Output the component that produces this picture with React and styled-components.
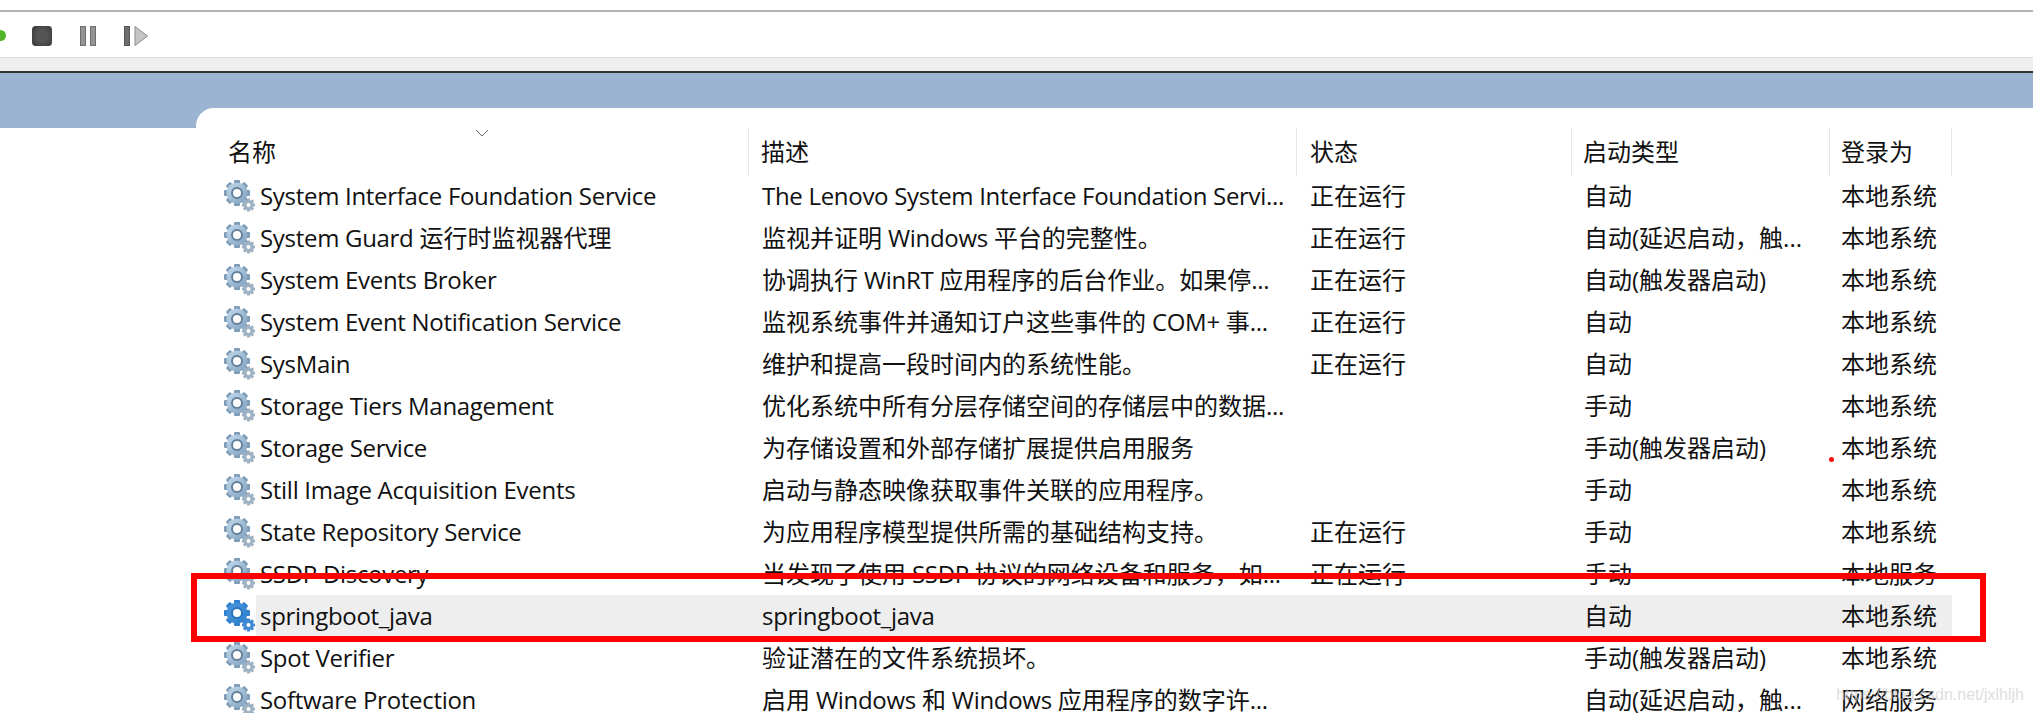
import React from 'react';
import styled, { createGlobalStyle } from 'styled-components';

const rows = [
    ['System Interface Foundation Service', 'The Lenovo System Interface Foundation Servi...', '正在运行', '自动', '本地系统'],
    ['System Guard 运行时监视器代理', '监视并证明 Windows 平台的完整性。', '正在运行', '自动(延迟启动，触...', '本地系统'],
    ['System Events Broker', '协调执行 WinRT 应用程序的后台作业。如果停...', '正在运行', '自动(触发器启动)', '本地系统'],
    ['System Event Notification Service', '监视系统事件并通知订户这些事件的 COM+ 事...', '正在运行', '自动', '本地系统'],
    ['SysMain', '维护和提高一段时间内的系统性能。', '正在运行', '自动', '本地系统'],
    ['Storage Tiers Management', '优化系统中所有分层存储空间的存储层中的数据...', '', '手动', '本地系统'],
    ['Storage Service', '为存储设置和外部存储扩展提供启用服务', '', '手动(触发器启动)', '本地系统'],
    ['Still Image Acquisition Events', '启动与静态映像获取事件关联的应用程序。', '', '手动', '本地系统'],
    ['State Repository Service', '为应用程序模型提供所需的基础结构支持。', '正在运行', '手动', '本地系统'],
    ['SSDP Discovery', '当发现了使用 SSDP 协议的网络设备和服务，如...', '正在运行', '手动', '本地服务'],
    ['springboot_java', 'springboot_java', '', '自动', '本地系统'],
    ['Spot Verifier', '验证潜在的文件系统损坏。', '', '手动(触发器启动)', '本地系统'],
    ['Software Protection', '启用 Windows 和 Windows 应用程序的数字许...', '', '自动(延迟启动，触...', '网络服务'],
];

// latin runs are tightened, the CJK widths already match
const mixed = text => text.split(/([\x20-\x7e]+)/).map((part, i) => (
    i % 2 ? <Latin key={i}>{part}</Latin> : part
));

const GearIcon = ({ active }) => {
    const id = active ? 'gearActive' : 'gearIdle';
    const edge = active ? '#2f7fce' : '#7f9cb6';
    const ring = active ? '#2a74bd' : '#64809a';
    const small = active ? '#3f8ad2' : '#9fb2c4';
    const teeth = [0, 45, 90, 135];
    return (
        <svg width="32" height="32" viewBox="0 0 32 32">
            <defs>
                <linearGradient id={id} x1="0" y1="0" x2="1" y2="1">
                    <stop offset="0" stopColor={active ? '#4a96dc' : '#c3dbee'}/>
                    <stop offset="1" stopColor={active ? '#2f7fce' : '#7f9fbd'}/>
                </linearGradient>
            </defs>
            {teeth.map(a => (
                <rect key={a} x="10" y="0" width="6" height="26" rx="1" fill={edge} transform={`rotate(${a} 13 13)`}/>
            ))}
            <circle cx="13" cy="13" r="10.5" fill={`url(#${id})`}/>
            <circle cx="13" cy="13" r="5" fill="#fff" stroke={ring} strokeWidth="2"/>
            {teeth.map(a => (
                <rect key={a} x="23" y="18.5" width="3" height="13" fill={small} transform={`rotate(${a} 24.5 25)`}/>
            ))}
            <circle cx="24.5" cy="25" r="5" fill={small}/>
            <circle cx="24.5" cy="25" r="2" fill="#fff"/>
        </svg>
    );
};

const App = () => {
    return (
        <Page>
            <GlobalStyle/>
            <TopGap/>
            <Toolbar>
                <RunDot/>
                <StopIcon/>
                <PauseIcon>
                    <i/><i/>
                </PauseIcon>
                <ResumeIcon>
                    <i/>
                    <svg width="14" height="20" viewBox="0 0 14 20">
                        <path d="M1 0.5 L13.5 10 L1 19.5 Z" fill="#c4c4c4" stroke="#8a8a8a"/>
                    </svg>
                </ResumeIcon>
            </Toolbar>
            <StatusStrip/>
            <Band/>
            <Workspace>
                <Rail>
                    <RailCap/>
                </Rail>
                <PanelBack>
                    <Panel>
                        <SortMark>
                            <svg width="14" height="8" viewBox="0 0 14 8">
                                <path d="M1 1 L7 7 L13 1" fill="none" stroke="#6b6b6b" strokeWidth="1"/>
                            </svg>
                        </SortMark>
                        <HeaderRow>
                            <HeadCell $w={525} $pad={4}>名称</HeadCell>
                            <HeadCell $w={548} $pad={12}>描述</HeadCell>
                            <HeadCell $w={275} $pad={13}>状态</HeadCell>
                            <HeadCell $w={258} $pad={11}>启动类型</HeadCell>
                            <HeadCell $w={122} $pad={11}>登录为</HeadCell>
                        </HeaderRow>
                        {rows.map(r => {
                            const active = r[0] === 'springboot_java';
                            return (
                                <Row key={r[0]}>
                                    <IconBox><GearIcon active={active}/></IconBox>
                                    <RowBody $active={active}>
                                        <Cell $w={493} $pad={4}>{mixed(r[0])}</Cell>
                                        <Cell $w={548} $pad={13}>{mixed(r[1])}</Cell>
                                        <Cell $w={275} $pad={13}>{r[2]}</Cell>
                                        <Cell $w={258} $pad={12}>{r[3]}</Cell>
                                        <Cell $w={122} $pad={11}>{r[4]}</Cell>
                                    </RowBody>
                                </Row>
                            );
                        })}
                    </Panel>
                </PanelBack>
            </Workspace>
            <RedBox/>
            <RedDot/>
            <Watermark>https://blog.csdn.net/jxlhljh</Watermark>
        </Page>
    );
};

const GlobalStyle = createGlobalStyle`
html, body {
    margin: 0;
    padding: 0;
    background: #fff;
    overflow: hidden;
}
`;

const Page = styled.div`
position: relative;
width: 2033px;
height: 713px;
overflow: hidden;
background: #fff;
display: flex;
flex-direction: column;
font-family: "Open Sans", "Noto Sans CJK SC", sans-serif;
color: #111;
`;

const TopGap = styled.div`
height: 10px;
border-bottom: 2px solid #b4b4b4;
flex: none;
`;

const Toolbar = styled.div`
height: 46px;
flex: none;
display: flex;
align-items: center;
border-bottom: 1px solid #dcdcdc;
padding-top: 2px;
box-sizing: border-box;
`;

const RunDot = styled.div`
width: 6px;
height: 11px;
background: #4fb52a;
border-radius: 0 6px 6px 0;
`;

const StopIcon = styled.div`
width: 20px;
height: 20px;
margin-left: 26px;
background: radial-gradient(circle, #555 40%, #3c3c3c 100%);
border: 1px solid #444;
border-radius: 3px;
box-sizing: border-box;
`;

const PauseIcon = styled.div`
display: flex;
gap: 4px;
margin-left: 28px;
i {
    display: block;
    width: 6px;
    height: 20px;
    background: #949494;
    border: 1px solid #6e6e6e;
    box-sizing: border-box;
}
`;

const ResumeIcon = styled.div`
display: flex;
align-items: center;
gap: 4px;
margin-left: 28px;
i {
    display: block;
    width: 6px;
    height: 20px;
    background: #6e6e6e;
    border: 1px solid #555;
    box-sizing: border-box;
}
`;

const StatusStrip = styled.div`
height: 13px;
flex: none;
background: #eeeeee;
border-bottom: 2px solid #333;
`;

const Band = styled.div`
height: 35px;
flex: none;
background: #9ab4d1;
`;

const Workspace = styled.div`
flex: 1;
display: flex;
min-height: 0;
`;

const Rail = styled.div`
width: 196px;
flex: none;
`;

const RailCap = styled.div`
height: 20px;
background: #9ab4d1;
`;

const PanelBack = styled.div`
flex: 1;
background: #9ab4d1;
min-width: 0;
`;

const Panel = styled.div`
position: relative;
height: 100%;
background: #fff;
border-top-left-radius: 18px;
padding: 20px 0 0 28px;
box-sizing: border-box;
`;

const SortMark = styled.div`
position: absolute;
left: 279px;
top: 21px;
line-height: 0;
`;

const HeaderRow = styled.div`
display: flex;
height: 48px;
`;

const HeadCell = styled.div`
width: ${p => p.$w}px;
padding-left: ${p => p.$pad}px;
box-sizing: border-box;
border-right: 1px solid #e6e6e6;
font-size: 24px;
line-height: 48px;
white-space: nowrap;
`;

const Row = styled.div`
display: flex;
height: 42px;
align-items: stretch;
margin-top: -1px;
margin-bottom: 1px;
`;

const IconBox = styled.div`
width: 32px;
flex: none;
display: flex;
align-items: center;
justify-content: center;
`;

const RowBody = styled.div`
display: flex;
background: ${p => (p.$active ? '#eeeeee' : 'transparent')};
`;

const Cell = styled.div`
width: ${p => p.$w}px;
padding-left: ${p => p.$pad}px;
box-sizing: border-box;
font-size: 24px;
line-height: 42px;
white-space: nowrap;
overflow: hidden;
`;

const Latin = styled.span`
letter-spacing: -0.3px;
`;

const RedBox = styled.div`
position: absolute;
left: 191px;
top: 573px;
width: 1795px;
height: 69px;
box-sizing: border-box;
border: 6px solid #ff0000;
`;

const RedDot = styled.div`
position: absolute;
left: 1829px;
top: 457px;
width: 5px;
height: 5px;
border-radius: 50%;
background: #ff0a0a;
`;

const Watermark = styled.div`
position: absolute;
right: 9px;
bottom: 6px;
font-family: "Liberation Sans", sans-serif;
font-size: 16px;
line-height: 24px;
color: rgba(205, 205, 205, 0.7);
`;

export default App;
